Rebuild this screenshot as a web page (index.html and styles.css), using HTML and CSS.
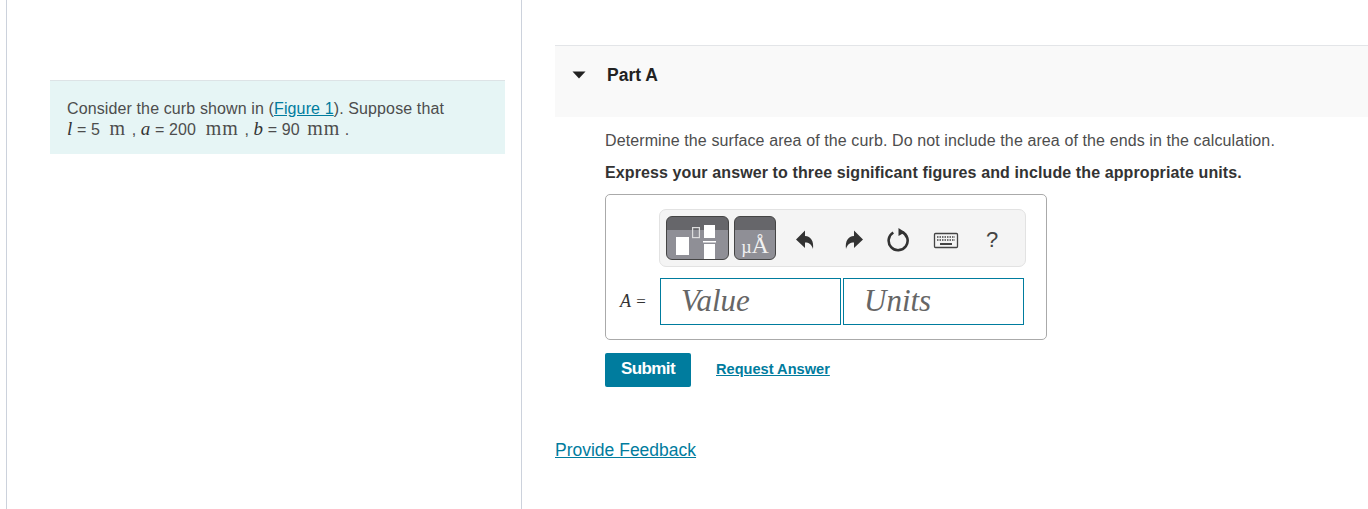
FILE: index.html
```html
<!DOCTYPE html>
<html lang="en">
<head>
<meta charset="utf-8">
<title>Part A</title>
<link rel="stylesheet" href="styles.css">
</head>
<body>
<div class="page">
  <aside class="left">
    <div class="intro">
      <p class="intro-line">Consider the curb shown in (<a href="#" class="intro-link">Figure 1</a>). Suppose that</p>
      <p class="intro-line math-line"><i class="mvar">l</i> = 5 <span class="unit">m</span> , <i class="mvar">a</i> = 200 <span class="unit">mm</span> , <i class="mvar">b</i> = 90 <span class="unit unit-last">mm</span> .</p>
    </div>
  </aside>
  <main class="right">
    <header class="part-head">
      <svg class="caret" width="14" height="8" viewBox="0 0 14 8"><path d="M0.500 0.500H13.500L7 7.500Z" fill="#222"/></svg>
      <span class="part-title">Part A</span>
    </header>
    <section class="part-body">
      <p class="question">Determine the surface area of the curb. Do not include the area of the ends in the calculation.</p>
      <p class="instruction">Express your answer to three significant figures and include the appropriate units.</p>
      <div class="answer-box">
        <div class="toolbar">
          <div class="tool-btn tool-wide">
            <svg width="63" height="43" viewBox="0 0 63 43"><rect x="9" y="21" width="13" height="18" fill="#fff"/><rect x="25.600" y="11.600" width="6.800" height="10" fill="none" stroke="#ddd" stroke-width="1.200"/><rect x="37" y="9" width="11" height="13" fill="#fff"/><rect x="36" y="25" width="13" height="1.500" fill="#fff"/><rect x="37" y="28" width="11" height="15" fill="#fff"/></svg>
          </div>
          <div class="tool-btn tool-unit"><span class="unit-glyph"><span class="unit-mu">µ</span>Å</span></div>
          <div class="tool-icons">
            <svg class="ico" width="20" height="24" viewBox="0 0 20 24"><path d="M1 11.500 10 2.500V8C16 8.500 19 13 18 21 16.500 16 14 14.500 10 14.500V20Z" fill="#333"/></svg>
            <svg class="ico" width="20" height="24" viewBox="0 0 20 24"><path d="M19 11.500 10 2.500V8C4 8.500 1 13 2 21 3.500 16 6 14.500 10 14.500V20Z" fill="#333"/></svg>
            <svg class="ico" width="24" height="26" viewBox="0 0 24 26"><path d="M6.300 5.500A9.500 9.500 0 1 0 15 5" fill="none" stroke="#333" stroke-width="2.600"/><path d="M11.500 1 18 5.300 11.500 9Z" fill="#333"/></svg>
            <svg class="ico" width="26" height="17" viewBox="0 0 26 17"><rect x="1.500" y="1.500" width="23" height="14" rx="1" fill="#f4f4f4" stroke="#444" stroke-width="1.300"/><path d="M4 5H22M4 8H22" stroke="#444" stroke-width="1.500" stroke-dasharray="1.500 1"/><path d="M7 12H19" stroke="#444" stroke-width="2"/></svg>
            <span class="help">?</span>
          </div>
        </div>
        <div class="answer-row">
          <span class="answer-label"><i class="mvar-a">A</i> =</span>
          <div class="field"><span class="placeholder">Value</span></div>
          <div class="field"><span class="placeholder">Units</span></div>
        </div>
      </div>
      <div class="actions">
        <button class="submit" type="button">Submit</button>
        <a href="#" class="request">Request Answer</a>
      </div>
    </section>
    <a href="#" class="feedback">Provide Feedback</a>
  </main>
</div>
</body>
</html>
```
FILE: styles.css
```css
* { box-sizing: border-box; }
html, body { margin: 0; padding: 0; height: 509px; overflow: hidden; background: #fff; }
body { font-family: "Liberation Sans", Arial, sans-serif; color: #333; }
p { margin: 0; }

.page { display: flex; height: 509px; padding-left: 6px; }

.left {
  width: 516px;
  flex: none;
  border-left: 1px solid #ccd2dc;
  border-right: 1px solid #ccd2dc;
  padding: 80px 16px 0 43px;
}
.intro {
  background: #e6f5f5;
  border-top: 1px solid #dde3e6;
  height: 74px;
  padding: 18px 16px 0 17px;
  font-size: 16px;
  letter-spacing: 0.12px;
  color: #4d4d4d;
}
.intro-line { height: 20px; line-height: 20px; }
.math-line { margin-top: -1px; }
.intro-link { color: #007c9e; text-decoration: underline; }
.mvar { font-family: "Liberation Serif", serif; font-size: 19px; line-height: 1; color: #333; }
.unit { font-family: "Liberation Serif", serif; font-size: 20px; line-height: 1; padding: 0 1px 0 5px; letter-spacing: 1px; }
.unit-last { padding: 0 0 0 3px; letter-spacing: 0.8px; }

.right { flex: 1; padding: 45px 0 0 33px; min-width: 0; }
.part-head {
  height: 72px;
  background: #f9f9f9;
  border-top: 1px solid #e3e5e8;
  display: flex;
  align-items: center;
  padding: 0 0 14px 17px;
}
.caret { flex: none; }
.part-title { margin: 2px 0 0 21px; font-size: 17.500px; font-weight: 700; color: #222; }

.part-body { padding: 14px 0 0 50px; }
.question { font-size: 16px; line-height: 20px; letter-spacing: 0.105px; color: #4d4d4d; }
.instruction { margin-top: 12px; font-size: 16px; line-height: 20px; letter-spacing: 0.11px; font-weight: 700; color: #333; }

.answer-box {
  width: 442px;
  height: 146px;
  margin-top: 11px;
  border: 1px solid #aaa;
  border-radius: 5px;
  padding: 14px 0 0 53px;
}
.toolbar {
  width: 367px;
  height: 58px;
  background: #f4f4f4;
  border: 1px solid #e2e2e2;
  border-radius: 7px;
  display: flex;
  align-items: center;
  padding-left: 6px;
}
.tool-btn {
  height: 44px;
  border: 1px solid #444;
  border-radius: 6px;
  background: linear-gradient(#66666a 0, #66666a 13px, #8f8f96 13px, #8f8f96 100%);
  overflow: hidden;
  flex: none;
}
.tool-wide { width: 63px; }
.tool-wide svg { display: block; margin-top: -1px; }
.tool-unit { width: 42px; margin-left: 5px; text-align: center; }
.unit-glyph {
  display: block;
  font-family: "Liberation Serif", serif;
  font-size: 24px;
  line-height: 24px;
  margin-top: 16px;
  color: #f2f2f2;
  white-space: nowrap;
}
.unit-mu { font-size: 18px; }
.tool-icons { display: flex; align-items: center; flex: none; margin: 4px 0 0 19px; }
.ico { display: block; flex: none; }
.ico:nth-child(2) { margin-left: 29px; }
.ico:nth-child(3) { margin-left: 23px; }
.ico:nth-child(4) { margin-left: 22px; }
.help { margin-left: 27px; font-size: 22px; line-height: 24px; color: #444; }

.answer-row { display: flex; align-items: center; margin-top: 11px; height: 47px; margin-left: -39px; }
.answer-label {
  width: 40px;
  flex: none;
  font-family: "Liberation Serif", serif;
  font-size: 17px;
  word-spacing: 1px;
  color: #333;
}
.mvar-a { font-size: 18px; font-weight: 400; }
.field {
  width: 181px;
  height: 47px;
  flex: none;
  border: 1px solid #007c9e;
  padding: 0 0 2px 20px;
  display: flex;
  align-items: center;
}
.field + .field { margin-left: 2px; }
.placeholder { font-family: "Liberation Serif", serif; font-style: italic; font-size: 31px; color: #666; }

.actions { display: flex; align-items: center; margin-top: 13px; }
.submit {
  width: 86px;
  height: 34px;
  background: #007c9e;
  border: 0;
  border-radius: 2px;
  color: #fff;
  font-family: "Liberation Sans", Arial, sans-serif;
  font-size: 17px;
  font-weight: 700;
  letter-spacing: -0.6px;
  padding: 0 0 2px;
}
.request { margin-left: 25px; margin-bottom: 2px; font-size: 14.600px; font-weight: 700; color: #007c9e; text-decoration: underline; }
.feedback { display: inline-block; margin-top: 52px; font-size: 17.500px; line-height: 22px; color: #007c9e; text-decoration: underline; }
```
